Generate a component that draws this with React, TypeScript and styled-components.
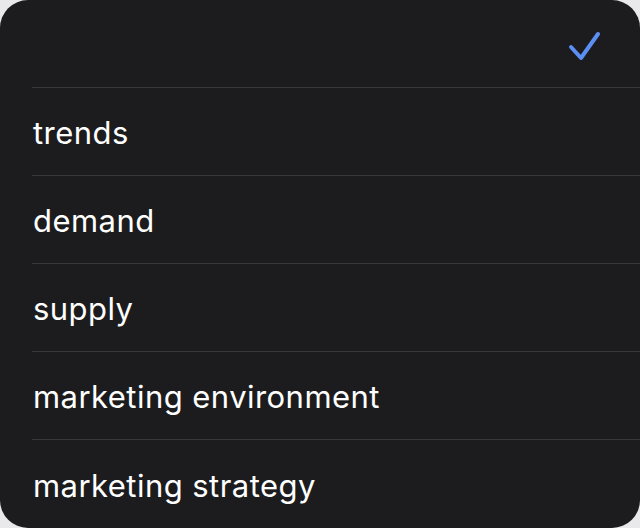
import React from "react";
import styled, { createGlobalStyle } from "styled-components";

const Global = createGlobalStyle`
  html, body { margin: 0; padding: 0; background: #e9e9eb; }
  body { width: 640px; height: 528px; overflow: hidden; }
`;

const Card = styled.div`
  width: 640px;
  height: 528px;
  box-sizing: border-box;
  background: #1c1c1e;
  border-radius: 28px;
  overflow: hidden;
  padding-left: 32px;
  display: flex;
  flex-direction: column;
  font-family: Inter, "Noto Sans", sans-serif;
`;

const Row = styled.div<{ $last?: boolean }>`
  height: 88px;
  flex: none;
  box-sizing: border-box;
  display: flex;
  align-items: center;
  justify-content: space-between;
  padding: 2px 40px 0 1px;
  border-bottom: ${(p) => (p.$last ? "none" : "1px solid #38383a")};
  color: #ffffff;
  font-size: 31px;
  letter-spacing: 0.45px;
`;

const Label = styled.span`
  line-height: 1;
`;

const Check = () => (
  <svg width="40" height="40" viewBox="0 0 40 40" style={{ marginRight: -3, marginTop: -2 }}>
    <path
      d="M8 23 L18 34 L35 10"
      fill="none"
      stroke="#5b8ff4"
      strokeWidth="4"
      strokeLinecap="round"
      strokeLinejoin="round"
    />
  </svg>
);

const items = ["trends", "demand", "supply", "marketing environment", "marketing strategy"];

export default function App() {
  return (
    <>
      <Global />
      <Card>
        <Row>
          <Label />
          <Check />
        </Row>
        {items.map((t, i) => (
          <Row key={t} $last={i === items.length - 1}>
            <Label>{t}</Label>
          </Row>
        ))}
      </Card>
    </>
  );
}
